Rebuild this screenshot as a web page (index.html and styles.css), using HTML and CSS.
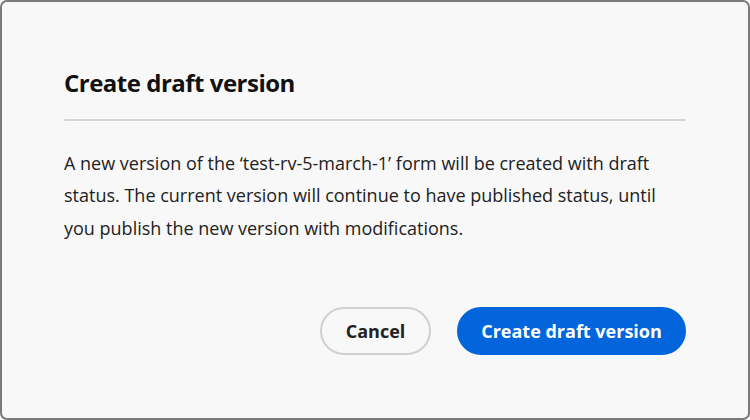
FILE: index.html
```html
<!DOCTYPE html>
<html>
<head>
<meta charset="utf-8">
<link rel="stylesheet" href="styles.css">
</head>
<body>
<div class="dialog">
  <h1 class="title">Create draft version</h1>
  <div class="divider"></div>
  <p class="content">A new version of the ‘test-rv-5-march-1’ form will be created with draft status. The current version will continue to have published status, until you publish the new version with modifications.</p>
  <div class="actions">
    <button class="btn btn-secondary">Cancel</button>
    <button class="btn btn-primary">Create draft version</button>
  </div>
</div>
</body>
</html>
```
FILE: styles.css
```css
html, body {
  margin: 0;
  padding: 0;
  background: #f8f8f8;
}
.dialog {
  box-sizing: border-box;
  width: 750px;
  height: 420px;
  border: 2px solid #7a7a7a;
  border-radius: 7px;
  background: #f8f8f8;
  padding: 0 62px;
  font-family: "Open Sans", "Lato", sans-serif;
  color: #222222;
  display: flex;
  flex-direction: column;
}
.title {
  margin: 65px 0 0;
  font-size: 24px;
  font-weight: 700;
  line-height: 32px;
  letter-spacing: -0.5px;
  color: #111111;
}
.divider {
  margin-top: 20px;
  height: 2px;
  border-radius: 1px;
  background: #d5d5d5;
}
.content {
  margin: 26px 0 0;
  font-size: 18px;
  line-height: 32.4px;
  color: #222222;
}
.actions {
  margin-top: auto;
  margin-bottom: 63px;
  display: flex;
  justify-content: flex-end;
  gap: 26px;
}
.btn {
  box-sizing: border-box;
  height: 48px;
  border-radius: 24px;
  font-family: inherit;
  font-size: 18px;
  font-weight: 700;
  padding: 0 20px;
  cursor: pointer;
}
.btn-secondary {
  width: 111px;
  background: #f8f8f8;
  border: 2px solid #d0d0d0;
  color: #222222;
}
.btn-primary {
  width: 229px;
  background: #0265dc;
  border: 2px solid #0265dc;
  color: #ffffff;
}
```
